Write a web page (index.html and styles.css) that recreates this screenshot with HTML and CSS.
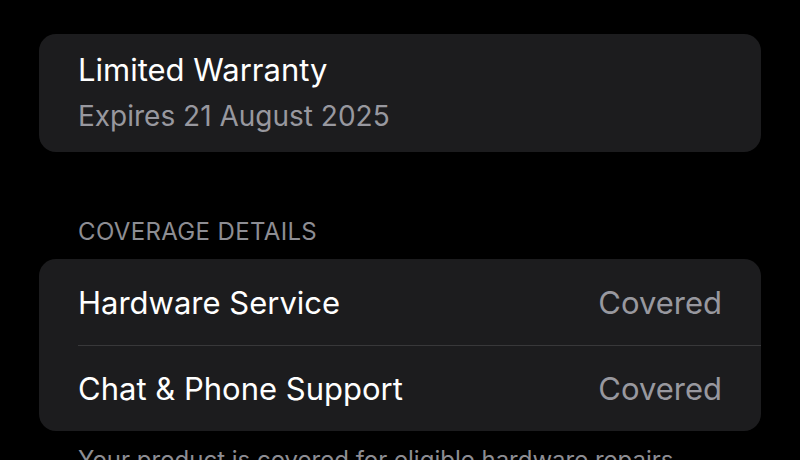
FILE: index.html
```html
<!DOCTYPE html>
<html>
<head>
<meta charset="utf-8">
<link rel="stylesheet" href="styles.css">
</head>
<body>
<div class="page">
  <div class="card summary">
    <div class="title">Limited Warranty</div>
    <div class="subtitle">Expires 21 August 2025</div>
  </div>
  <div class="section-header">COVERAGE DETAILS</div>
  <div class="card list">
    <div class="row">
      <span class="label">Hardware Service</span>
      <span class="value">Covered</span>
    </div>
    <div class="row">
      <span class="label">Chat &amp; Phone Support</span>
      <span class="value">Covered</span>
    </div>
  </div>
  <div class="footer">Your product is covered for eligible hardware repairs and service under Apple's Limited Warranty.</div>
</div>
</body>
</html>
```
FILE: styles.css
```css
html, body {
  margin: 0;
  padding: 0;
  background: #000;
  height: 100%;
  overflow: hidden;
}
body {
  font-family: Inter, "Noto Sans", sans-serif;
  color: #fff;
}
.page {
  padding: 34px 39px 0;
}
.card {
  background: #1c1c1e;
  border-radius: 17px;
}
.summary {
  padding: 14px 39px 13px;
}
.title {
  font-size: 31px;
  line-height: 44px;
  color: #fff;
}
.subtitle {
  font-size: 28px;
  line-height: 46px;
  padding-top: 1px;
  color: #98989f;
}
.section-header {
  margin-top: 64px;
  padding-left: 39px;
  font-size: 24px;
  line-height: 32px;
  letter-spacing: 0.35px;
  color: #8d8d93;
}
.list {
  margin-top: 11px;
  padding-left: 39px;
}
.row {
  height: 86px;
  display: flex;
  align-items: center;
  justify-content: space-between;
  padding-right: 39px;
  box-sizing: border-box;
}
.row + .row {
  border-top: 1px solid #38383a;
}
.label {
  font-size: 31px;
  color: #fff;
}
.value {
  font-size: 31px;
  color: #98989f;
}
.footer {
  margin-top: 14px;
  padding: 0 39px;
  font-size: 24px;
  line-height: 30px;
  color: #8d8d93;
}
```
